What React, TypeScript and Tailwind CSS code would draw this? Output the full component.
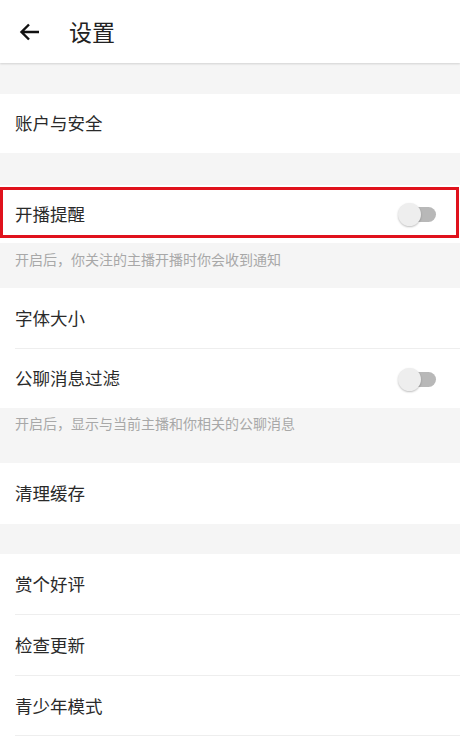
import type { ReactNode } from "react";

const font = { fontFamily: '"Noto Sans CJK SC", "Noto Sans", sans-serif' };

function Toggle() {
  return (
    <div className="relative h-[22px] w-[40px] shrink-0">
      <div className="absolute left-[4px] right-[2px] top-[4px] h-[15px] rounded-full bg-[#b8b8b8]" />
      <div className="absolute left-0 top-0 h-[23px] w-[23px] rounded-full bg-[#eeeeee] shadow-[0_1px_2px_rgba(0,0,0,0.25)]" />
    </div>
  );
}

type RowProps = {
  label: string;
  height: string;
  toggle?: boolean;
  divider?: boolean;
  children?: ReactNode;
};

function Row({ label, height, toggle, divider, children }: RowProps) {
  return (
    <div className={`relative flex items-center bg-white pl-[15px] pr-[22px] ${height}`}>
      <span className="flex-1 text-[17.5px] text-[#2a2a2a]">{label}</span>
      {toggle && <Toggle />}
      {divider && <div className="absolute bottom-0 left-[15px] right-0 h-px bg-[#eeeeee]" />}
      {children}
    </div>
  );
}

function Hint({ text, height }: { text: string; height: string }) {
  return (
    <div className={`bg-[#f5f5f5] px-[15px] text-[14px] text-[#a8a8a8] ${height}`}>{text}</div>
  );
}

export default function App() {
  return (
    <div className="h-[743px] w-[460px] overflow-hidden bg-white" style={font}>
      <header className="relative z-10 flex h-[63px] items-center bg-white shadow-[0_1px_2px_rgba(0,0,0,0.15)]">
        <svg width="24" height="24" viewBox="0 0 24 24" className="ml-[18px]">
          <path d="M21 12H4M11 4.5 3.5 12l7.5 7.5" fill="none" stroke="#111" strokeWidth="2.4" />
        </svg>
        <span className="ml-[27px] text-[23px] text-[#222]">设置</span>
      </header>

      <div className="h-[31px] bg-[#f5f5f5]" />
      <Row label="账户与安全" height="h-[59px]" />
      <div className="h-[32px] bg-[#f5f5f5]" />

      <Row label="开播提醒" height="h-[58px]" toggle>
        <div className="absolute left-0 right-px top-[2px] bottom-[5px] border-[3px] border-[#e0121c]" />
      </Row>
      <Hint text="开启后，你关注的主播开播时你会收到通知" height="h-[45px] pt-[6px]" />

      <Row label="字体大小" height="h-[61px]" divider />
      <Row label="公聊消息过滤" height="h-[59px]" toggle />
      <Hint text="开启后，显示与当前主播和你相关的公聊消息" height="h-[55px] pt-[5px]" />

      <Row label="清理缓存" height="h-[61px]" />
      <div className="h-[30px] bg-[#f5f5f5]" />

      <Row label="赏个好评" height="h-[61px]" divider />
      <Row label="检查更新" height="h-[61px]" divider />
      <Row label="青少年模式" height="h-[60px]" divider />
    </div>
  );
}
